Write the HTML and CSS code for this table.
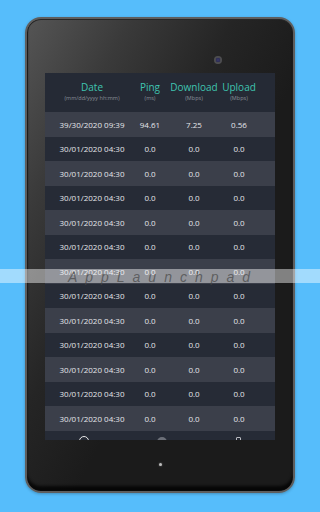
FILE: index.html
```html
<!DOCTYPE html>
<html>
<head>
<meta charset="utf-8">
<link rel="stylesheet" href="styles.css">
</head>
<body>
<div class="device">
  <div class="top-bezel"><span class="camera"></span></div>
  <div class="screen">
    <div class="row head">
      <div class="cell"><span class="title">Date</span><span class="sub">(mm/dd/yyyy hh:mm)</span></div>
      <div class="cell"><span class="title">Ping</span><span class="sub">(ms)</span></div>
      <div class="cell"><span class="title">Download</span><span class="sub">(Mbps)</span></div>
      <div class="cell"><span class="title">Upload</span><span class="sub">(Mbps)</span></div>
    </div>
    <div class="row light"><div class="cell">39/30/2020 09:39</div><div class="cell">94.61</div><div class="cell">7.25</div><div class="cell">0.56</div></div>
    <div class="row"><div class="cell">30/01/2020 04:30</div><div class="cell">0.0</div><div class="cell">0.0</div><div class="cell">0.0</div></div>
    <div class="row light"><div class="cell">30/01/2020 04:30</div><div class="cell">0.0</div><div class="cell">0.0</div><div class="cell">0.0</div></div>
    <div class="row"><div class="cell">30/01/2020 04:30</div><div class="cell">0.0</div><div class="cell">0.0</div><div class="cell">0.0</div></div>
    <div class="row light"><div class="cell">30/01/2020 04:30</div><div class="cell">0.0</div><div class="cell">0.0</div><div class="cell">0.0</div></div>
    <div class="row"><div class="cell">30/01/2020 04:30</div><div class="cell">0.0</div><div class="cell">0.0</div><div class="cell">0.0</div></div>
    <div class="row light"><div class="cell">30/01/2020 04:30</div><div class="cell">0.0</div><div class="cell">0.0</div><div class="cell">0.0</div></div>
    <div class="row"><div class="cell">30/01/2020 04:30</div><div class="cell">0.0</div><div class="cell">0.0</div><div class="cell">0.0</div></div>
    <div class="row light"><div class="cell">30/01/2020 04:30</div><div class="cell">0.0</div><div class="cell">0.0</div><div class="cell">0.0</div></div>
    <div class="row"><div class="cell">30/01/2020 04:30</div><div class="cell">0.0</div><div class="cell">0.0</div><div class="cell">0.0</div></div>
    <div class="row light"><div class="cell">30/01/2020 04:30</div><div class="cell">0.0</div><div class="cell">0.0</div><div class="cell">0.0</div></div>
    <div class="row"><div class="cell">30/01/2020 04:30</div><div class="cell">0.0</div><div class="cell">0.0</div><div class="cell">0.0</div></div>
    <div class="row light"><div class="cell">30/01/2020 04:30</div><div class="cell">0.0</div><div class="cell">0.0</div><div class="cell">0.0</div></div>
    <div class="nav">
      <span class="nav-ring"></span>
      <span class="nav-dot"></span>
      <span class="nav-rect"></span>
    </div>
  </div>
  <div class="bottom-bezel"><span class="home"></span></div>
</div>
<div class="watermark">AppLaunchpad</div>
</body>
</html>
```
FILE: styles.css
```css
* { box-sizing: border-box; }
html, body { margin: 0; padding: 0; }
body {
  width: 320px;
  height: 512px;
  background: #56bdfb;
  font-family: "Open Sans", "Liberation Sans", sans-serif;
  padding-top: 17px;
  overflow: hidden;
}
.device {
  width: 270px;
  height: 476px;
  margin-left: 25px;
  border: 2px solid #5e5e5e;
  border-radius: 16px;
  background: linear-gradient(118deg, #555555 0%, #3a3a3a 20%, #252525 40%, #1b1b1b 58%, #1b1b1b 100%);
  box-shadow: inset 0 -5px 3px rgba(0,0,0,0.75), inset 0 0 0 1px #262626, 0 1px 3px rgba(0,0,0,0.25);
  display: flex;
  flex-direction: column;
  align-items: center;
}
.top-bezel {
  width: 100%;
  height: 54px;
  display: flex;
  align-items: flex-start;
  padding-top: 37px;
  padding-left: 187px;
}
.camera {
  width: 8px;
  height: 8px;
  border-radius: 50%;
  background: radial-gradient(circle, #3a3a6a 0, #2c2c55 35%, #4a4a4e 45%, #555 100%);
}
.screen {
  width: 230px;
  height: 367px;
  background: #262b36;
  overflow: hidden;
}
.row {
  display: grid;
  grid-template-columns: 94px 22px 66px 24px;
  height: 24.5px;
  align-items: center;
  font-size: 8px;
  color: #e4e6ea;
}
.row.light { background: #3b3f4a; }
.row.head {
  height: 39px;
  background: #252a35;
  align-items: start;
  padding-top: 8px;
}
.cell {
  display: flex;
  flex-direction: column;
  align-items: center;
  white-space: nowrap;
}
.title {
  font-size: 10px;
  line-height: 13px;
  color: #3fc4b0;
}
.sub {
  font-size: 5.5px;
  line-height: 8px;
  color: #8a8f98;
}
.nav {
  height: 12px;
  display: flex;
  justify-content: space-around;
  align-items: flex-start;
  padding-top: 5px;
}
.nav-ring {
  width: 10px;
  height: 10px;
  border: 1.3px solid #e8e8e8;
  border-radius: 50%;
}
.nav-dot {
  width: 10px;
  height: 10px;
  margin-top: 1px;
  background: #6b6f78;
  border-radius: 50%;
}
.nav-rect {
  width: 5px;
  height: 8px;
  margin-top: 1px;
  border: 1px solid #b8bac0;
  border-radius: 1px;
}
.bottom-bezel {
  width: 100%;
  height: 51px;
  display: flex;
  justify-content: center;
  padding-top: 23px;
}
.home {
  width: 3px;
  height: 3px;
  border-radius: 50%;
  background: #bdbdbd;
  box-shadow: 0 0 2px rgba(255,255,255,0.4);
}
.watermark {
  position: absolute;
  left: 0;
  top: 269px;
  width: 320px;
  height: 14px;
  background: rgba(255,255,255,0.45);
  font-family: "Liberation Sans", Arial, sans-serif;
  font-style: italic;
  font-size: 14px;
  line-height: 17px;
  letter-spacing: 8px;
  color: rgba(70,70,70,0.7);
  text-align: center;
  padding-left: 6px;
}
```
